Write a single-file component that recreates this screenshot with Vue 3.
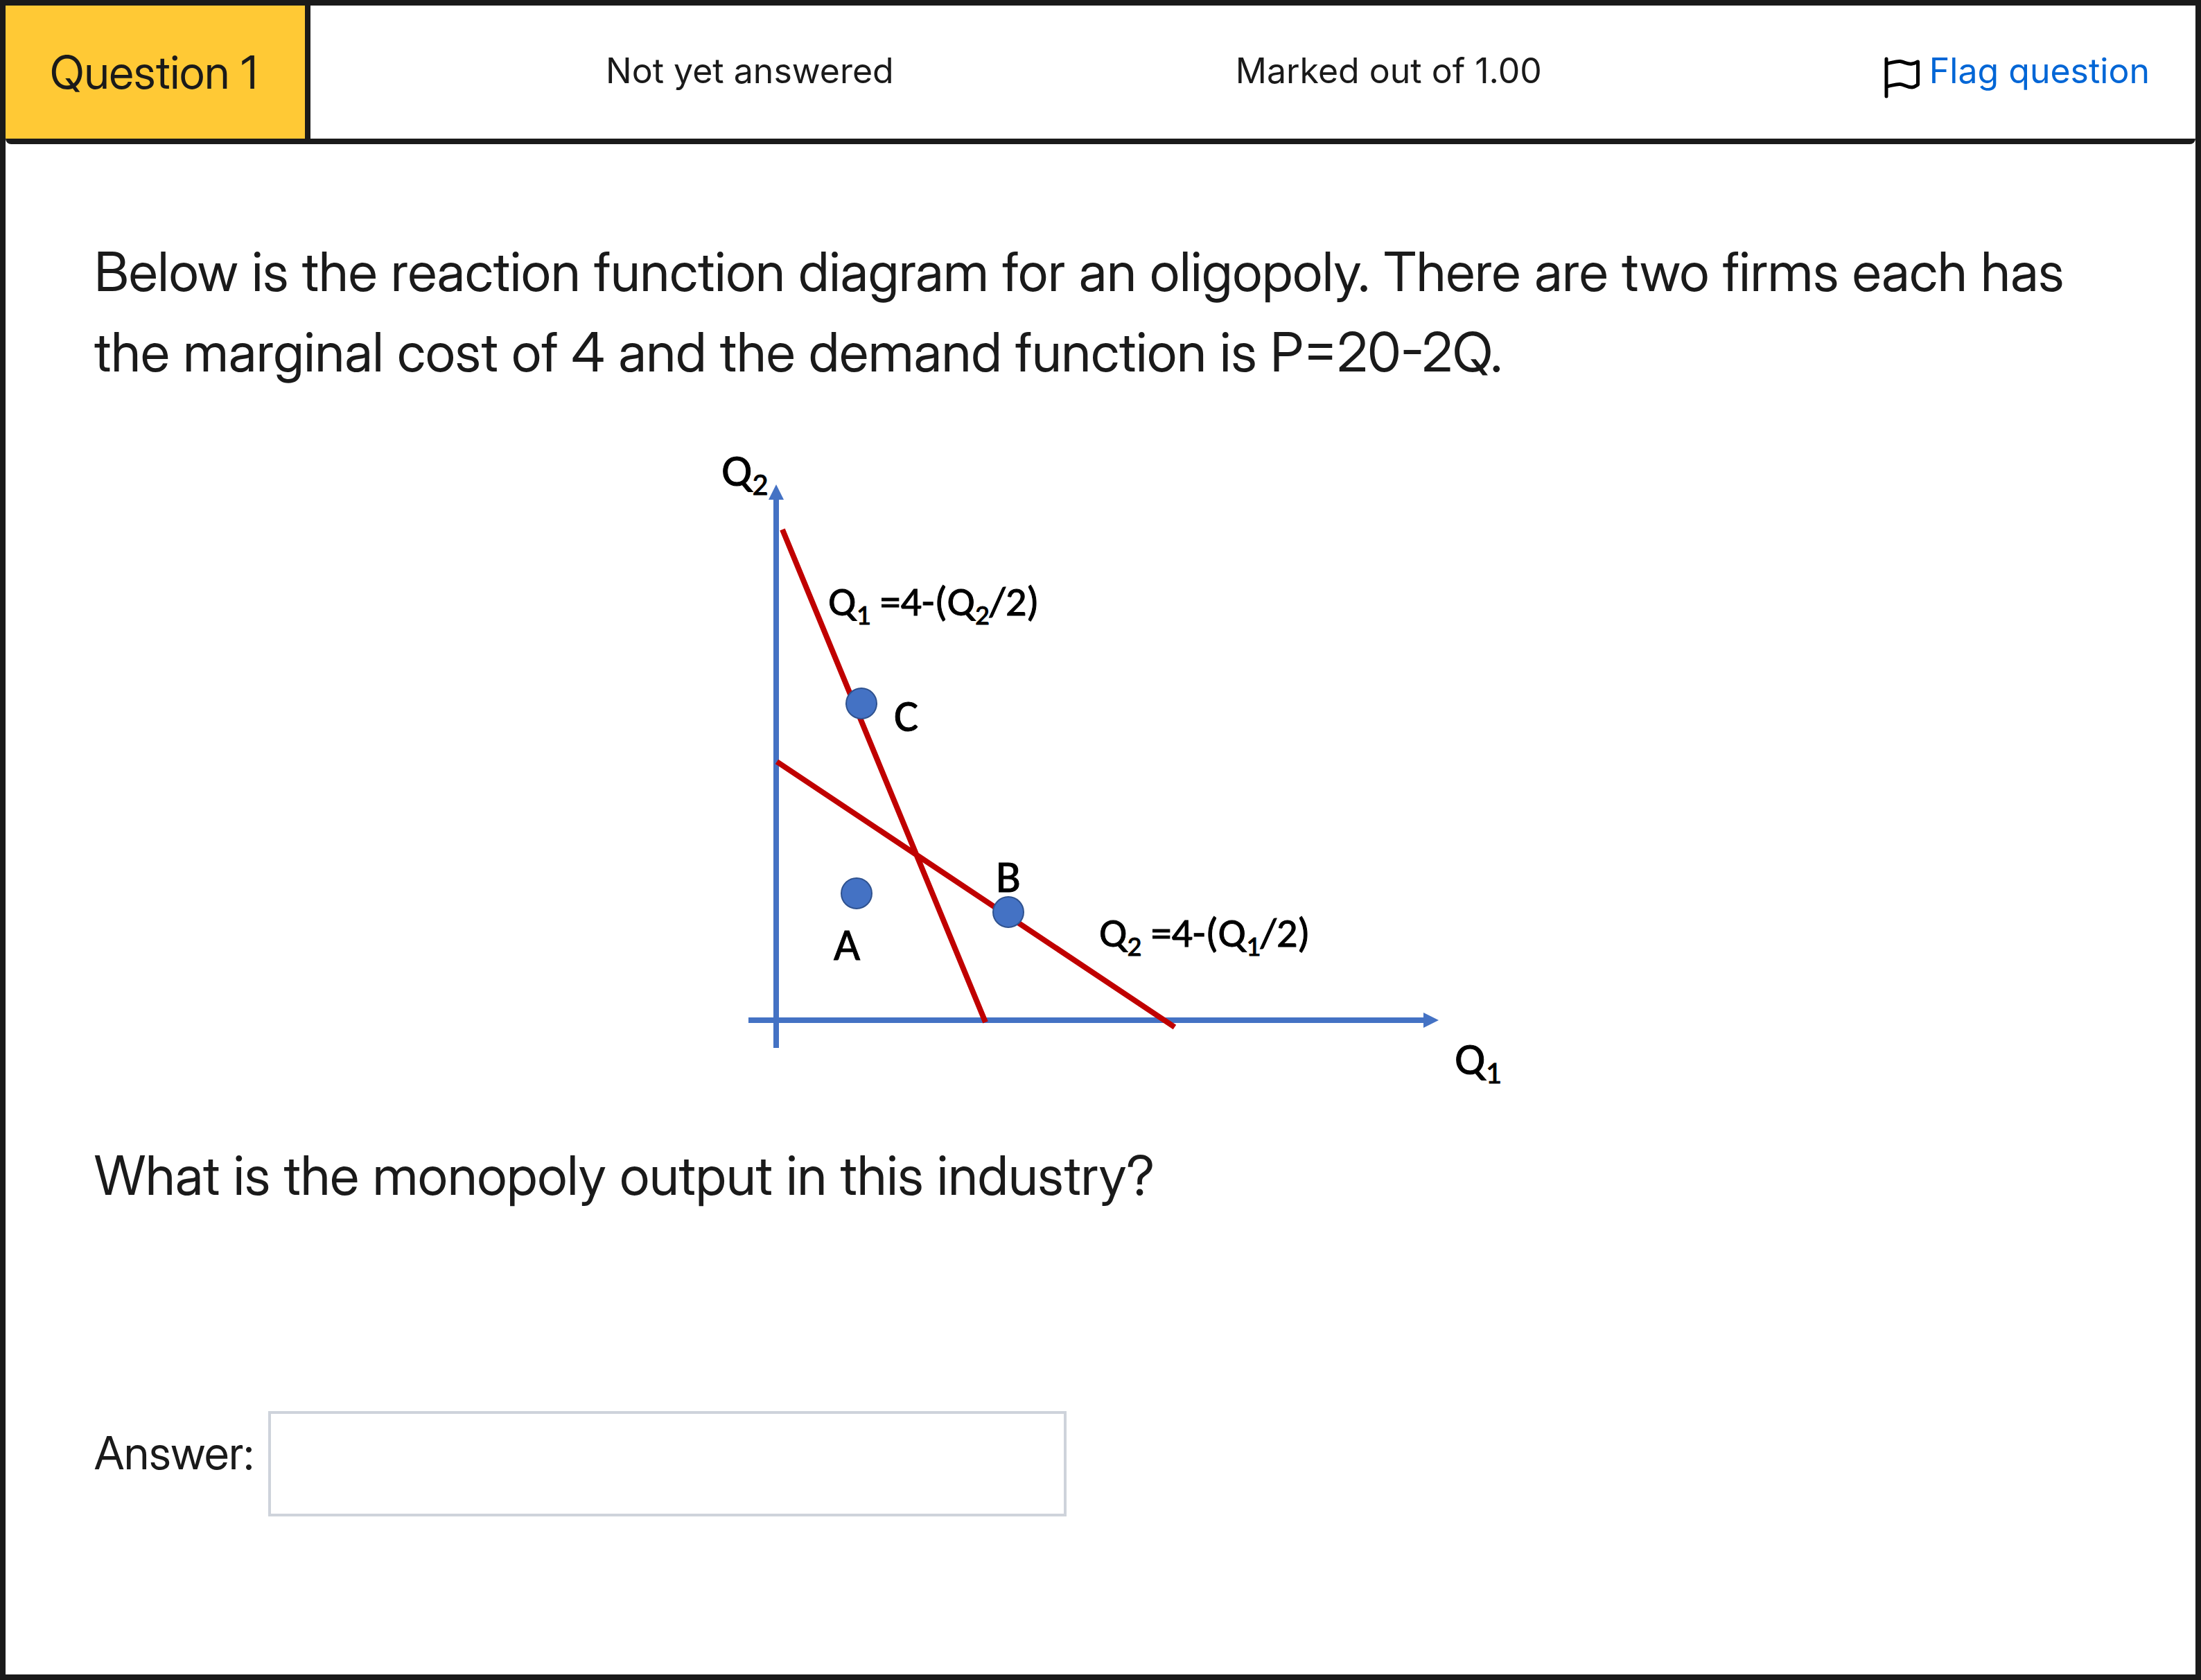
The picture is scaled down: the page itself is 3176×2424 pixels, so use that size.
<script setup>
import { ref } from 'vue'

const answer = ref('')

const points = [
  { name: 'A', cx: 236, cy: 669, x: 203, y: 765 },
  { name: 'B', cx: 455, cy: 696, x: 437, y: 667 },
  { name: 'C', cx: 243, cy: 395, x: 290, y: 435 },
]

const axisLabels = [
  { sub: '2', x: 41, y: 81 },
  { sub: '1', x: 1099, y: 930 },
]

const equations = [
  { left: '1', right: '2', x: 195, y: 268 },
  { left: '2', right: '1', x: 586, y: 746 },
]
</script>

<template>
  <main class="question">
    <header class="bar">
      <h1 class="number">Question 1</h1>
      <div class="info">
        <span>Not yet answered</span>
        <span>Marked out of 1.00</span>
        <a class="flag" href="#flag">
          <svg class="flag-icon" viewBox="0 0 54 60" aria-hidden="true">
            <path d="M4 3V57M4 10C14 8 18 6 24 6.500C32 8 34 11 41 10C46 9.500 47 7.500 49.500 7V40C46 42 45 43.500 41 44C33 44 30 40 24 39.500C18 39 14 41 4 43" />
          </svg>
          <span>Flag question</span>
        </a>
      </div>
    </header>

    <section class="body">
      <p class="text">
        Below is the reaction function diagram for an oligopoly. There are two firms each has the
        marginal cost of 4 and the demand function is P=20-2Q.
      </p>

      <svg class="diagram" viewBox="0 0 1176 960" role="img" aria-label="Reaction functions of two firms">
        <g class="axes">
          <path d="M120 98V892M80 852H1058" />
          <polygon points="120,79 131,101 109,101" />
          <polygon points="1076,852 1054,841 1054,863" />
        </g>
        <path class="reaction" d="M129 144L422 855M121 479L695 862" />
        <g v-for="p in points" :key="p.name">
          <circle class="point" :cx="p.cx" :cy="p.cy" r="22" />
          <text class="label" :x="p.x" :y="p.y">{{ p.name }}</text>
        </g>
        <text v-for="a in axisLabels" :key="a.sub" class="label" :x="a.x" :y="a.y">Q<tspan class="label-sub" dy="13">{{ a.sub }}</tspan></text>
        <text v-for="e in equations" :key="e.left" class="equation" :x="e.x" :y="e.y">Q<tspan class="equation-sub" dy="13">{{ e.left }}</tspan><tspan dy="-13"> =4-(Q</tspan><tspan class="equation-sub" dy="13">{{ e.right }}</tspan><tspan dy="-13">/2)</tspan></text>
      </svg>

      <p class="text">What is the monopoly output in this industry?</p>

      <div class="answer">
        <label for="answer">Answer:</label>
        <input id="answer" v-model="answer" type="text" autocomplete="off" />
      </div>
    </section>
  </main>
</template>

<style>
body {
  margin: 0;
  background: #fff;
}
</style>

<style scoped>
.question {
  box-sizing: border-box;
  min-height: 100vh;
  border: 8px solid #1a1a1a;
  background: #fff;
  color: #1a1a1a;
  font-family: "Inter Display", Inter, "Liberation Sans", sans-serif;
}

.bar {
  display: flex;
  min-height: 192px;
  border-bottom: 8px solid #1a1a1a;
  border-radius: 0 0 8px 8px;
}

.number {
  display: flex;
  box-sizing: border-box;
  align-items: center;
  min-width: 440px;
  margin: 0;
  padding: 0 64px;
  border-right: 8px solid #1a1a1a;
  background: #ffc935;
  font-size: 66px;
  font-weight: 400;
  line-height: 80px;
}

.info {
  display: flex;
  flex: 1;
  align-items: flex-start;
  justify-content: space-between;
  padding: 62px 66px 0 426px;
  font-family: Inter, "Liberation Sans", sans-serif;
  font-size: 50px;
  line-height: 64px;
}

.flag {
  display: flex;
  gap: 12px;
  color: #0066d6;
  text-decoration: none;
}

.flag-icon {
  width: 54px;
  height: 60px;
  margin-top: 12px;
  fill: none;
  stroke: #000;
  stroke-width: 5;
  stroke-linecap: round;
  stroke-linejoin: round;
}

.body {
  padding: 126px 128px;
}

.text {
  margin: 0;
  font-size: 78px;
  line-height: 116px;
}

.diagram {
  display: block;
  width: 100%;
  max-width: 1176px;
  margin: 54px auto 58px;
}

.axes path {
  fill: none;
  stroke: #4472c4;
  stroke-width: 8;
}

.axes polygon {
  fill: #4472c4;
}

.reaction {
  fill: none;
  stroke: #c00000;
  stroke-width: 8;
}

.point {
  fill: #4472c4;
  stroke: #2f528f;
  stroke-width: 2;
}

.label,
.equation {
  fill: #000;
  stroke: #000;
  stroke-width: 1;
  font-family: Carlito, Calibri, Lato, sans-serif;
}

.label {
  font-size: 66px;
}

.label-sub {
  font-size: 45px;
}

.equation {
  font-size: 60px;
}

.equation-sub {
  font-size: 41px;
}

.answer {
  display: flex;
  gap: 21px;
  margin-top: 282px;
  font-size: 66px;
  line-height: 80px;
}

.answer label {
  padding-top: 20px;
}

.answer input {
  box-sizing: border-box;
  width: 1152px;
  height: 152px;
  padding: 0 24px;
  border: 4px solid #ced3db;
  border-radius: 0;
  background: #fff;
  color: inherit;
  font: inherit;
}
</style>
